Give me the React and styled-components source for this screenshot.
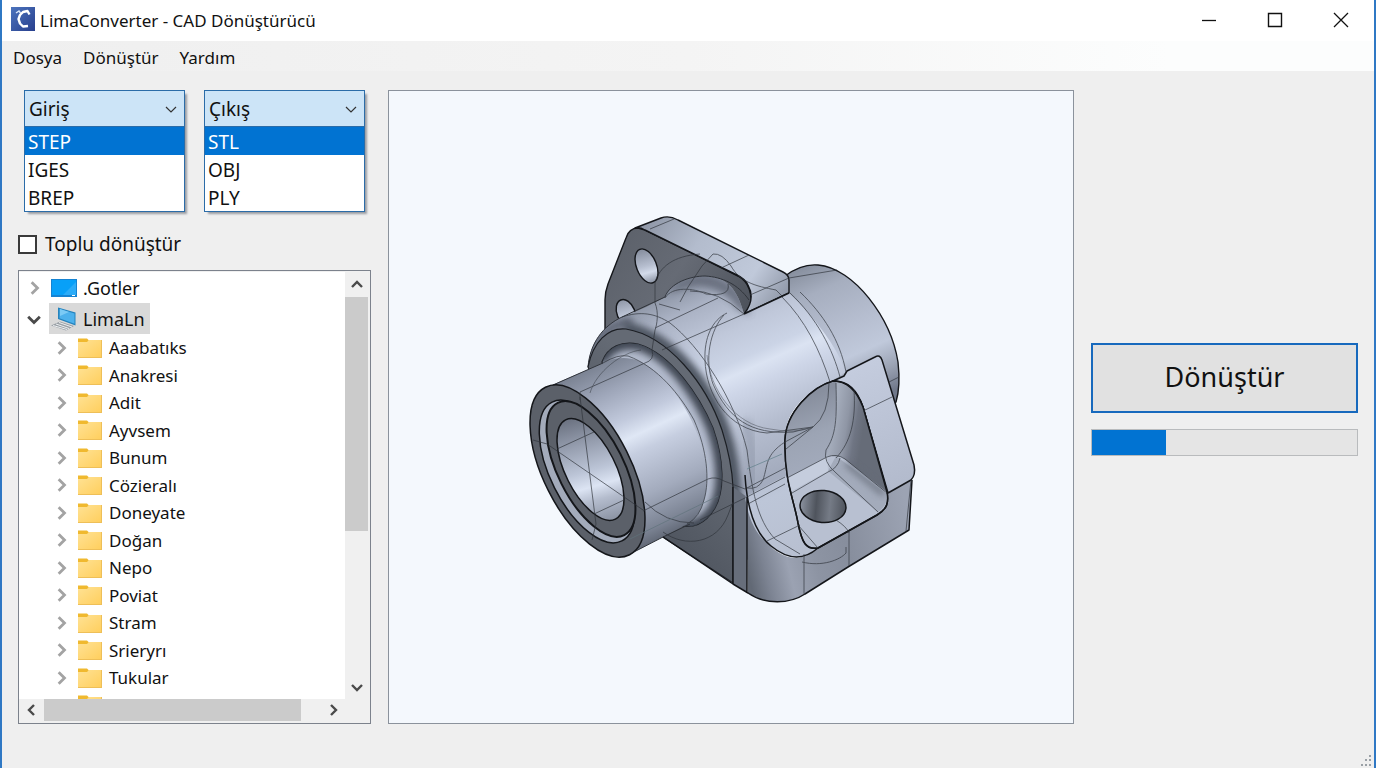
import * as React from 'react'
import styled, { createGlobalStyle } from 'styled-components'

const GlobalStyle = createGlobalStyle`
  * {
    box-sizing: border-box;
  }

  body {
    margin: 0;
    font-family: 'Noto Sans', 'Open Sans', sans-serif;
    color: #111111;
  }

  button, select, input {
    font: inherit;
    color: inherit;
  }

  ul {
    margin: 0;
    padding: 0;
    list-style: none;
  }
`

const Window = styled.div`
  display: flex;
  flex-direction: column;
  height: 100vh;
  overflow: hidden;

  border: solid #2f78c4;
  border-width: 0 2px;
  background-color: #efefef;
`

const TitleBar = styled.header`
  display: flex;
  align-items: center;
  flex: none;
  height: 41px;
  padding-left: 9px;

  background-color: white;
`

const Title = styled.h1`
  flex: 1;
  margin: 0 0 0 5px;

  font-size: 17px;
  font-weight: 400;
  line-height: 24px;
`

const AppLogo = styled.svg`
  margin-bottom: 3px;
`

const WindowControls = styled.div`
  display: flex;
`

const WindowButton = styled.button`
  display: grid;
  place-items: center;
  width: 66px;
  height: 41px;
  padding: 0 0 2px;
  border: 0;

  background: none;
`

const MenuBar = styled.nav`
  display: flex;
  align-items: center;
  flex: none;
  gap: 21px;
  height: 30px;
  padding: 4px 11px 0;

  background: linear-gradient(90deg, #efefef, #f4f4f4 50%, #fcfdfd 85%);
`

const MenuButton = styled.button`
  padding: 0;
  border: 0;

  background: none;
  font-size: 17px;
  line-height: 24px;
`

const Body = styled.main`
  display: grid;
  grid-template-columns: 353px minmax(0, 1fr) 267px;
  grid-template-rows: minmax(0, 1fr);
  flex: 1;
  gap: 17px;
  min-height: 0;
  padding: 19px 16px 44px;
`

const Sidebar = styled.section`
  display: flex;
  flex-direction: column;
  min-height: 0;
`

const Formats = styled.div`
  display: flex;
  gap: 19px;
  padding: 0 6px;
`

const Combo = styled.div`
  flex: 1;
  box-shadow: 3px 3px 2px -1px #9a9da3;
`

const ComboHead = styled.div`
  display: grid;
  align-items: center;
  border: 1px solid #2b6ca8;

  background-color: #cce4f7;

  svg {
    grid-area: 1 / 1;
    justify-self: end;
    margin-right: 7px;
    pointer-events: none;
  }
`

const ComboSelect = styled.select`
  grid-area: 1 / 1;
  width: 100%;
  height: 35px;
  padding: 0 4px;
  border: 0;
  appearance: none;

  background: none;
  font-size: 19px;
`

const Options = styled.ul`
  border: 1px solid #2b6ca8;
  border-top: 0;

  background-color: white;
`

const Option = styled.li`
  height: 28px;
  padding: 0 3px;

  background-color: ${({ $selected }) => ($selected ? '#0173d2' : 'white')};
  color: ${({ $selected }) => ($selected ? 'white' : '#111111')};
  font-size: 19px;
  line-height: 30px;
`

const BatchLabel = styled.label`
  display: flex;
  align-items: center;
  gap: 8px;
  height: 28px;
  margin: 18px 0 12px;

  font-size: 19px;
`

const Checkbox = styled.input`
  width: 19px;
  height: 19px;
  margin: 0;
  border: 2px solid #3a3a3a;
  appearance: none;

  background-color: white;
`

const TreeFrame = styled.div`
  display: grid;
  grid-template-columns: minmax(0, 1fr) 23px;
  grid-template-rows: minmax(0, 1fr) 22px;
  flex: 1;
  min-height: 0;
  padding: 1px 2px 2px 0;
  border: 1px solid #7c828c;

  background-color: #f0f0f0;
`

const Tree = styled.ul`
  overflow: hidden;
  padding-top: 1px;

  background-color: white;
`

const RootRow = styled.div`
  display: flex;
  align-items: center;
  gap: 7px;
  height: ${({ $open }) => ($open ? 31 : 30)}px;
  padding-left: 7px;

  font-size: 18px;
`

const RootName = styled.span`
  display: flex;
  align-items: center;
  gap: 6px;
  height: 31px;
  padding: 0 5px 0 2px;

  background-color: ${({ $selected }) => ($selected ? '#d9d9d9' : 'white')};
`

const FolderRow = styled.li`
  display: flex;
  align-items: center;
  height: 27px;
  padding-left: 34px;

  font-size: 17px;

  &:nth-child(even) {
    height: 28px;
  }
`

const FolderName = styled.span`
  margin-left: 7px;
`

const Expander = styled.button`
  display: grid;
  place-items: center;
  width: 16px;
  height: 20px;
  padding: 0;
  border: 0;

  background: none;
`

const FolderExpander = styled(Expander)`
  margin-right: 9px;
`

const VerticalBar = styled.div`
  display: flex;
  flex-direction: column;
`

const HorizontalBar = styled.div`
  display: flex;
`

const BarButton = styled.button`
  display: grid;
  place-items: center;
  flex: 0 0 25px;
  padding: 0;
  border: 0;

  background: none;
`

const Track = styled.div`
  display: flex;
  flex: 1;
  flex-direction: ${({ $vertical }) => ($vertical ? 'column' : 'row')};
`

const Thumb = styled.div`
  flex: 0 0 ${({ $share }) => $share}%;

  background-color: #cbcbcb;
`

const Viewport = styled.section`
  border: 1px solid #8b929c;

  background-color: #f4f8fd;

  svg {
    display: block;
    width: 100%;
    height: 100%;
  }
`

const Actions = styled.section`
  display: flex;
  flex-direction: column;
  align-self: center;
  gap: 16px;
  padding-bottom: 15px;
`

const ConvertButton = styled.button`
  height: 70px;
  padding: 0 0 4px;
  border: 2px solid #1769bd;

  background-color: #e1e1e1;
  font-size: 27px;
`

const Progress = styled.progress`
  width: 100%;
  height: 27px;
  border: 1px solid #b9bbbd;
  appearance: none;

  background-color: #e5e5e5;

  &::-webkit-progress-bar {
    background-color: #e5e5e5;
  }

  &::-webkit-progress-value {
    background-color: #0173d2;
  }
`

const Grip = styled.svg`
  position: absolute;
  right: 4px;
  bottom: 0;
`

const ARROWS = {
  up: 'M1 8 L6 3 L11 8',
  down: 'M1 4 L6 9 L11 4',
  left: 'M8 1 L3 6 L8 11',
  right: 'M4 1 L9 6 L4 11',
}

function Arrow({ to, color = '#4a4a4a', width = 2.4, size = 12 }) {
  return (
    <svg width={size} height={size} viewBox="0 0 12 12" aria-hidden="true">
      <path d={ARROWS[to]} fill="none" stroke={color} strokeWidth={width} />
    </svg>
  )
}

function AppIcon() {
  return (
    <AppLogo width="24" height="24" viewBox="0 0 24 24" aria-hidden="true">
      <defs>
        <linearGradient id="app" x1="0" y1="0" x2="1" y2="1">
          <stop offset="0" stopColor="#4c74bd" />
          <stop offset="1" stopColor="#283f8d" />
        </linearGradient>
      </defs>
      <rect width="24" height="24" fill="url(#app)" />
      <path
        d="M5 6 L8 4 L9.500 6"
        fill="none"
        stroke="#dbe7f8"
        strokeWidth="1.500"
      />
      <path
        d="M18.500 7.500 L16.500 4 L12 5 L9 8 L7.500 12 L9 16.500 L12 19.500 L17 19"
        fill="none"
        stroke="white"
        strokeWidth="2.400"
        strokeLinejoin="round"
      />
    </AppLogo>
  )
}

function DesktopIcon() {
  return (
    <svg width="26" height="18" viewBox="0 0 26 18" aria-hidden="true">
      <rect width="26" height="18" fill="#1583d2" />
      <rect x="1" y="1" width="24" height="15" fill="#08a0f8" />
      <path d="M12 16 L25 3 V16 Z" fill="#2cacf8" />
      <path d="M21 16.500 H24" stroke="white" />
    </svg>
  )
}

function ComputerIcon() {
  return (
    <svg width="26" height="24" viewBox="0 0 26 24" aria-hidden="true">
      <path d="M7 0.500 L24.500 5.500 V18.500 L7 12 Z" fill="#2583bd" />
      <path d="M8.500 2 L23.500 6.500 V16.800 L8.500 11.200 Z" fill="#4db1ec" />
      <path d="M9 2 L18 5 L9 9 Z" fill="#7bcaf5" />
      <path d="M0 18.500 L9 14.500 L23 19 L15 23.500 Z" fill="#9ba1a7" />
      <path
        d="M2 18.500 L16 22.500 M5 17 L18 21.500 M8 15.500 L21 20"
        stroke="#edf0f2"
      />
    </svg>
  )
}

function FolderIcon() {
  return (
    <svg width="24" height="20" viewBox="0 0 24 20" aria-hidden="true">
      <defs>
        <linearGradient id="folder" x1="0" y1="0" x2="1" y2="1">
          <stop offset="0" stopColor="#ffe294" />
          <stop offset="1" stopColor="#ffce5c" />
        </linearGradient>
      </defs>
      <path d="M0 0.500 H9 L11 2.500 L9 5 H0 Z" fill="#f0b92f" />
      <path d="M0 4 H9 L11 2 H24 V20 H0 Z" fill="url(#folder)" />
      <path d="M0 19.500 H24 M23.500 2 V20" stroke="#eebf58" fill="none" />
    </svg>
  )
}

function Gradient({ id, from, to, stops }) {
  return (
    <linearGradient
      id={id}
      gradientUnits="userSpaceOnUse"
      x1={from[0]}
      y1={from[1]}
      x2={to[0]}
      y2={to[1]}
    >
      {stops.map(([offset, color]) => (
        <stop key={offset} offset={offset} stopColor={color} />
      ))}
    </linearGradient>
  )
}

function PartModel() {
  const tilt = (x, y) => `translate(${x} ${y}) rotate(-26.700)`

  return (
    <svg viewBox="389 91 684 632" role="img" aria-label="CAD modeli">
      <defs>
        <Gradient
          id="face"
          from={[610, 230]}
          to={[740, 320]}
          stops={[
            [0, '#5b6069'],
            [0.5, '#666b75'],
            [1, '#4d525b'],
          ]}
        />
        <Gradient
          id="rim"
          from={[650, 215]}
          to={[780, 305]}
          stops={[
            [0, '#8f97a7'],
            [0.35, '#b3bccd'],
            [0.75, '#c0c9da'],
            [1, '#9098a8'],
          ]}
        />
        <Gradient
          id="back"
          from={[810, 262]}
          to={[872, 400]}
          stops={[
            [0, '#868e9d'],
            [0.2, '#a6aebf'],
            [0.5, '#b7bfd1'],
            [0.68, '#c0c9db'],
            [0.85, '#9aa2b3'],
            [1, '#70788a'],
          ]}
        />
        <Gradient
          id="body"
          from={[715, 270]}
          to={[800, 460]}
          stops={[
            [0, '#8c94a4'],
            [0.12, '#a9b1c3'],
            [0.3, '#c0c8da'],
            [0.44, '#cbd4e6'],
            [0.5, '#dbe3f2'],
            [0.58, '#ced6e8'],
            [0.78, '#b5bdcf'],
            [1, '#a4acbe'],
          ]}
        />
        <Gradient
          id="tube"
          from={[585, 372]}
          to={[662, 538]}
          stops={[
            [0, '#7c8494'],
            [0.15, '#9da5b8'],
            [0.33, '#c2cadd'],
            [0.43, '#dfe7f5'],
            [0.52, '#c6cee0'],
            [0.75, '#a3abbd'],
            [0.93, '#7b8393'],
            [1, '#636a78'],
          ]}
        />
        <Gradient
          id="bore"
          from={[10, -52]}
          to={[-10, 54]}
          stops={[
            [0, '#6d7483'],
            [0.25, '#969eaf'],
            [0.5, '#bcc5d7'],
            [0.65, '#dce4f3'],
            [0.78, '#b4bccd'],
            [1, '#8a92a2'],
          ]}
        />
        <Gradient
          id="hole"
          from={[2, -17]}
          to={[-2, 17]}
          stops={[
            [0, '#868e9e'],
            [0.5, '#b7bfd0'],
            [0.7, '#d3dbea'],
            [1, '#8f97a7'],
          ]}
        />
        <Gradient
          id="front"
          from={[660, 540]}
          to={[733, 470]}
          stops={[
            [0, '#4f555f'],
            [1, '#646a74'],
          ]}
        />
        <Gradient
          id="base"
          from={[745, 560]}
          to={[910, 520]}
          stops={[
            [0, '#626975'],
            [0.1, '#7c8392'],
            [0.24, '#9ba2b2'],
            [0.4, '#8d94a3'],
            [0.6, '#878e9d'],
            [1, '#9ca3b3'],
          ]}
        />
        <Gradient
          id="slab"
          from={[762, 458]}
          to={[800, 550]}
          stops={[
            [0, '#b0b8ca'],
            [0.4, '#bdc6d8'],
            [1, '#b8c0d1'],
          ]}
        />
        <Gradient
          id="wall"
          from={[797, 400]}
          to={[822, 470]}
          stops={[
            [0, '#888f9e'],
            [0.5, '#9ca4b4'],
            [1, '#a3abbc'],
          ]}
        />
        <Gradient
          id="corner"
          from={[833, 420]}
          to={[864, 425]}
          stops={[
            [0, '#a6aebd'],
            [0.45, '#8f96a5'],
            [0.75, '#6f7583'],
            [1, '#666c78'],
          ]}
        />
        <Gradient
          id="lug"
          from={[850, 370]}
          to={[905, 480]}
          stops={[
            [0, '#c4ccde'],
            [1, '#b3bbcd'],
          ]}
        />
        <Gradient
          id="drill"
          from={[-23, 0]}
          to={[23, 0]}
          stops={[
            [0, '#8b929f'],
            [0.35, '#4f545d'],
            [0.65, '#757b86'],
            [1, '#4e535c'],
          ]}
        />
        <filter id="soft" x="-20%" y="-20%" width="140%" height="140%">
          <feGaussianBlur stdDeviation="3.500" />
        </filter>
        <clipPath id="bodyClip">
          <path d="M588 367 C590 343 603 326 622 317 C640 310 655 303 665 297 C670 283 690 276 705 276 C722 277 736 283 744 314 L789 293 L846 372 L830 382 L800 402 L785 440 L788 480 L798 530 L747 560 L733 487 Z" />
        </clipPath>
        <clipPath id="ringClip">
          <path d="M602 362 C608 346 622 341 638 344 C672 354 700 397 713 428 C724 460 725 490 715 508 C705 525 691 529 680 525 L664 517 Z" />
        </clipPath>
      </defs>

      <g stroke="#14161a" strokeWidth="1.400" strokeLinejoin="round">
        {/* rear barrel */}
        <path
          d="M785 276 C797 267 807 264 818 265 C854 268 891 318 898 362 C900 380 899 392 896 402 L850 440 L770 330 Z"
          fill="url(#back)"
        />

        {/* flange plate */}
        <path
          d="M605 330 V300 Q605 292 608 284 L626 238 Q629 228 638 228 L645 230 L738 276 C749 282 753 295 750 307 L744 315 L690 350 Z"
          fill="url(#face)"
        />
        <path
          d="M635 228 L661 218 Q669 215 678 220 L783 272 Q789 275 789 280 V293 L744 314 C752 304 753 294 748 285 Q745 279 737 275 L645 230 Q640 227 635 228 Z"
          fill="url(#rim)"
        />
        <ellipse
          transform="translate(646.500 266) rotate(-22)"
          rx="10"
          ry="18"
          fill="url(#hole)"
        />
        <ellipse
          transform="translate(626 313) rotate(-22)"
          rx="9"
          ry="14"
          fill="url(#hole)"
        />
      </g>

      {/* main body */}
      <path
        d="M588 367 C590 343 603 326 622 317 C640 310 655 303 665 297 C670 283 690 276 705 276 C722 277 736 283 744 314 L789 293 C815 318 836 345 846 372 L830 382 C800 395 785 415 785 440 C785 475 795 500 798 530 L747 560 L733 487 Z"
        fill="url(#body)"
      />
      <g clipPath="url(#bodyClip)">
        <path
          d="M668 293 C676 279 692 273 708 275 C730 279 745 290 750 314 L738 310 C730 295 712 285 694 286 Z"
          fill="#5f6573"
          opacity=".8"
          filter="url(#soft)"
        />
        <path
          d="M586 372 C590 343 606 324 632 322"
          fill="none"
          stroke="#5d6472"
          strokeWidth="9"
          filter="url(#soft)"
        />
        <path
          d="M624 328 C668 334 708 383 724 430 Q735 462 735 500"
          fill="none"
          stroke="#4c525f"
          strokeWidth="12"
          filter="url(#soft)"
        />
        <path
          d="M745 420 Q757 460 750 492"
          fill="none"
          stroke="#8c94a5"
          strokeWidth="10"
          opacity=".5"
          filter="url(#soft)"
        />
      </g>
      <path
        d="M588 367 C590 343 603 326 622 317 L665 297 C670 283 690 276 705 276 C722 277 738 284 749 300"
        fill="none"
        stroke="#30343b"
      />
      <path d="M744 314 L789 293" stroke="#14161a" strokeWidth="1.500" />

      {/* front block */}
      <path
        d="M588 367 C593 342 608 327 626 329 C668 336 706 383 722 430 Q732 462 733 487 V583 L663 537 Z"
        fill="url(#front)"
        stroke="#1c1f24"
        strokeWidth="1.200"
      />
      <path d="M733 487 L747 497 V592 L733 584 Z" fill="#676e7b" />
      <path
        d="M602 362 C608 346 622 341 638 344 C672 354 700 397 713 428 C724 460 725 490 715 508 C705 525 691 529 680 525 L664 517 Z"
        fill="#b3bbcd"
        stroke="#1c1f24"
        strokeWidth="1.200"
      />
      <g clipPath="url(#ringClip)">
        <path
          d="M600 362 C608 346 622 341 638 344 C672 354 700 397 713 428 C724 460 725 490 715 508 C705 525 691 529 680 525"
          fill="none"
          stroke="#414753"
          strokeWidth="13"
          filter="url(#soft)"
        />
      </g>

      {/* tube */}
      <path
        d="M552 385 L603 363 C620 355 636 356 652 369 C680 391 697 427 705 457 C711 490 703 516 687 524 L663 537 L630 554 L575 470 Z"
        fill="url(#tube)"
      />
      <path
        d="M553 385 L603 363 M630 554 L663 537 L690 524"
        fill="none"
        stroke="#30343b"
      />
      <g stroke="#14161a" strokeWidth="1.500">
        <ellipse
          transform={tilt(587.5, 471)}
          rx="43.800"
          ry="93.700"
          fill="#5b6069"
        />
        <ellipse
          transform={tilt(587, 471.5)}
          rx="36.400"
          ry="77.700"
          fill="#a3abbb"
        />
        <ellipse
          transform={tilt(591, 469)}
          rx="33"
          ry="74"
          fill="#5b6069"
          strokeWidth="2"
        />
        <ellipse
          transform={tilt(590.5, 469.5)}
          rx="25"
          ry="55.500"
          fill="url(#bore)"
        />
      </g>

      {/* base with the open pocket */}
      <g stroke="#14161a" strokeWidth="1.500" strokeLinejoin="round">
        <path
          d="M747 490 C752 535 775 558 797 558 Q808 556 818 548 L877 515 Q888 508 888 493 L912 479 L909 530 L848 567 L805 594 C790 604 765 605 748 593 Z"
          fill="url(#base)"
          stroke="none"
        />
        <path
          d="M745 497 C749 522 757 536 771 546 C788 560 803 561 818 548 C803 551 801 530 797 515 L787 475 Z"
          fill="url(#slab)"
          stroke="none"
        />
        <path
          d="M833 381 L844 376 L847 371 L875 357 Q880 354 882 360 L914 465 Q916 475 911 480 L888 493 L863 407 Q854 380 833 381 Z"
          fill="url(#lug)"
        />
        <path
          d="M833 381 C812 387 786 412 785 440 C784 480 794 500 798 523 C802 543 806 550 818 548 L877 515 C887 509 889 503 887 492 L863 407 Q853 381 833 381 Z"
          fill="#b8c0d1"
        />
        <path
          d="M833 382 C812 387 786 412 785 440 L787 478 L827 457 C836 440 837 410 836 382 Z"
          fill="url(#wall)"
          stroke="none"
        />
        <path
          d="M836 382 Q853 383 863 407 L887 492 L842 457 L826 456 C836 435 837 410 836 382 Z"
          fill="url(#corner)"
          stroke="none"
        />
        <path
          d="M787 478 L827 457 L828 471 L792 491 Z"
          fill="#c5cddd"
          stroke="none"
        />
        <path
          d="M836 456 L887 494 Q888 505 878 512 L828 471 Z"
          fill="#a3abbb"
          stroke="none"
        />
        <path
          d="M846 463 L884 494"
          stroke="#646a77"
          strokeWidth="6"
          opacity=".8"
          filter="url(#soft)"
        />
        <ellipse
          transform="translate(823 506.500) rotate(5)"
          rx="23"
          ry="16"
          fill="url(#drill)"
        />
        <path
          d="M833 381 C812 387 786 412 785 440 C784 480 794 500 798 523 C802 543 806 550 818 548 L877 515 C887 509 889 503 887 492 L863 407 Q853 381 833 381 Z M745 475 C747 510 755 533 771 546 C788 560 803 561 818 548 M912 480 L909 530 L848 567 L805 594 C790 604 765 605 748 593 L733 584 L663 537 M733 487 V584 M747 497 V592"
          fill="none"
        />
      </g>

      {/* thin construction edges */}
      <g fill="none" stroke="#2f333a" strokeWidth=".9" opacity=".75">
        <path d="M650 229 L674 219 M713 254 Q722 253 731 266 C740 282 755 286 776 290 L782 296 M713 254 L702 266 L688 287 L680 302 M721 268 L749 255 M750 295 L789 278 L837 270" />
        <path d="M655 303 V282 C660 267 673 256 700 254 M655 303 C659 312 657 325 655 330 L652 350 Q655 360 645 363 L580 392 V400 M659 304 L680 310" />
        <path d="M665 298 C672 286 694 288 706 294 Q731 297 728 284 M690 291 Q718 290 744 314 M655 328 L718 298 M662 350 L744 314" />
        <path d="M622 317 C640 311 655 313 670 323 C700 346 735 400 747 450 C752 490 757 520 775 539 L800 554" />
        <path d="M727 313 C712 320 704 338 705 360 C706 395 728 430 767 433 L813 427 Q829 415 829 383" />
        <path d="M724 315 C710 330 704 360 713 384 C728 418 750 435 793 432 L813 427 L786 449" />
        <path d="M707 355 C710 390 735 425 770 429 Q795 434 813 427" opacity=".6" />
        <path d="M813 427 L785 442 C765 455 768 465 763 480 Q758 490 747 488" />
        <path d="M782 297 C805 320 820 350 830 382 M790 293 C817 318 833 350 840 377 M800 292 C823 314 840 340 846 372" />
        <path d="M603 363 Q618 354 628 356 C658 367 680 395 694 420 C707 450 710 480 704 500 Q700 517 687 524" />
        <path d="M590 393 C596 372 622 352 641 350" opacity=".7" />
        <path d="M643 511 L708 479 Q716 476 724 481 L745 489 L785 468 M645 502 Q665 523 694 523" />
        <path d="M663 532 C685 548 717 544 728 515 L733 502 M700 520 L747 497 L785 477" />
        <path d="M533 440 L547 444 L643 510 M580 397 L596 524 L592 540 M557 449 L594 432 M594 514 L624 500" />
        <path d="M836 383 C837 420 836 435 826 450 Q823 462 835 472 L878 512 M854 390 C856 420 851 442 836 458 M787 478 L827 457 Q836 453 845 459 L887 493 M792 493 L828 472 Q838 468 840 458" />
        <path d="M748 504 L785 484 M767 541 L800 525 M798 525 L818 548 M804 554 V594 M849 532 V566 M863 411 L892 397 M889 382 L899 377 M911 480 L906 531" />
        <path d="M802 562 C822 567 840 560 846 553 V547 M836 520 Q847 527 849 533" />
        <path d="M747 469 L782 454" stroke="#5e7e88" />
        <path d="M630 539 L718 496" stroke="#60737c" />
      </g>
    </svg>
  )
}

const FORMATS = [
  { id: 'input', label: 'Giriş', options: ['STEP', 'IGES', 'BREP'] },
  { id: 'output', label: 'Çıkış', options: ['STL', 'OBJ', 'PLY'] },
]

const FOLDERS = [
  'Aaabatıks',
  'Anakresi',
  'Adit',
  'Ayvsem',
  'Bunum',
  'Cözieralı',
  'Doneyate',
  'Doğan',
  'Nepo',
  'Poviat',
  'Stram',
  'Srieryrı',
  'Tukular',
  '',
]

function FormatCombo({ id, label, options }) {
  const [selected, setSelected] = React.useState(options[0])

  return (
    <Combo>
      <ComboHead>
        <ComboSelect
          id={id}
          aria-label={label}
          value=""
          onChange={(event) => setSelected(event.target.value)}
        >
          <option value="">{label}</option>
          {options.map((option) => (
            <option key={option}>{option}</option>
          ))}
        </ComboSelect>
        <Arrow to="down" color="#333333" width={1.2} />
      </ComboHead>
      <Options role="listbox" aria-label={label}>
        {options.map((option) => (
          <Option
            key={option}
            role="option"
            aria-selected={option === selected}
            $selected={option === selected}
            onClick={() => setSelected(option)}
          >
            {option}
          </Option>
        ))}
      </Options>
    </Combo>
  )
}

function FolderTree() {
  return (
    <TreeFrame>
      <Tree role="tree" aria-label="Klasörler">
        <li role="treeitem">
          <RootRow>
            <Expander aria-label="Genişlet">
              <Arrow to="right" color="#a3a3a3" size={14} />
            </Expander>
            <RootName>
              <DesktopIcon />
              .Gotler
            </RootName>
          </RootRow>
        </li>
        <li role="treeitem">
          <RootRow $open>
            <Expander aria-label="Daralt">
              <Arrow to="down" size={14} />
            </Expander>
            <RootName $selected>
              <ComputerIcon />
              LimaLn
            </RootName>
          </RootRow>
          <ul role="group">
            {FOLDERS.map((name) => (
              <FolderRow key={name} role="treeitem">
                <FolderExpander aria-label="Genişlet">
                  {name && <Arrow to="right" color="#a3a3a3" size={14} />}
                </FolderExpander>
                <FolderIcon />
                <FolderName>{name}</FolderName>
              </FolderRow>
            ))}
          </ul>
        </li>
      </Tree>
      <VerticalBar>
        <BarButton aria-label="Yukarı">
          <Arrow to="up" />
        </BarButton>
        <Track $vertical>
          <Thumb $share={62} />
        </Track>
        <BarButton aria-label="Aşağı">
          <Arrow to="down" />
        </BarButton>
      </VerticalBar>
      <HorizontalBar>
        <BarButton aria-label="Sola">
          <Arrow to="left" />
        </BarButton>
        <Track>
          <Thumb $share={93} />
        </Track>
        <BarButton aria-label="Sağa">
          <Arrow to="right" />
        </BarButton>
      </HorizontalBar>
    </TreeFrame>
  )
}

export default function App() {
  const [isBatch, setIsBatch] = React.useState(false)

  return (
    <Window>
      <GlobalStyle />
      <TitleBar>
        <AppIcon />
        <Title>LimaConverter - CAD Dönüştürücü</Title>
        <WindowControls>
          <WindowButton aria-label="Küçült">
            <svg width="16" height="16" viewBox="0 0 16 16">
              <path d="M1 8.500 H15" stroke="#111" strokeWidth="1.300" />
            </svg>
          </WindowButton>
          <WindowButton aria-label="Büyüt">
            <svg width="16" height="16" viewBox="0 0 16 16">
              <path
                d="M1.500 1.500 H14.500 V14.500 H1.500 Z"
                fill="none"
                stroke="#111"
                strokeWidth="1.400"
              />
            </svg>
          </WindowButton>
          <WindowButton aria-label="Kapat">
            <svg width="16" height="16" viewBox="0 0 16 16">
              <path
                d="M1 1 L15 15 M15 1 L1 15"
                stroke="#111"
                strokeWidth="1.300"
              />
            </svg>
          </WindowButton>
        </WindowControls>
      </TitleBar>
      <MenuBar>
        <MenuButton>Dosya</MenuButton>
        <MenuButton>Dönüştür</MenuButton>
        <MenuButton>Yardım</MenuButton>
      </MenuBar>
      <Body>
        <Sidebar>
          <Formats>
            {FORMATS.map((format) => (
              <FormatCombo key={format.id} {...format} />
            ))}
          </Formats>
          <BatchLabel>
            <Checkbox
              type="checkbox"
              checked={isBatch}
              onChange={() => setIsBatch(!isBatch)}
            />
            Toplu dönüştür
          </BatchLabel>
          <FolderTree />
        </Sidebar>
        <Viewport>
          <PartModel />
        </Viewport>
        <Actions>
          <ConvertButton>Dönüştür</ConvertButton>
          <Progress value={28} max={100} aria-label="İlerleme" />
        </Actions>
      </Body>
      <Grip width="14" height="14" viewBox="0 0 14 14" aria-hidden="true">
        <path
          d="M11 2 h2 M7 6 h2 M11 6 h2 M3 11 h2 M7 11 h2 M11 11 h2"
          stroke="#9aa0a6"
          strokeWidth="2"
        />
      </Grip>
    </Window>
  )
}
